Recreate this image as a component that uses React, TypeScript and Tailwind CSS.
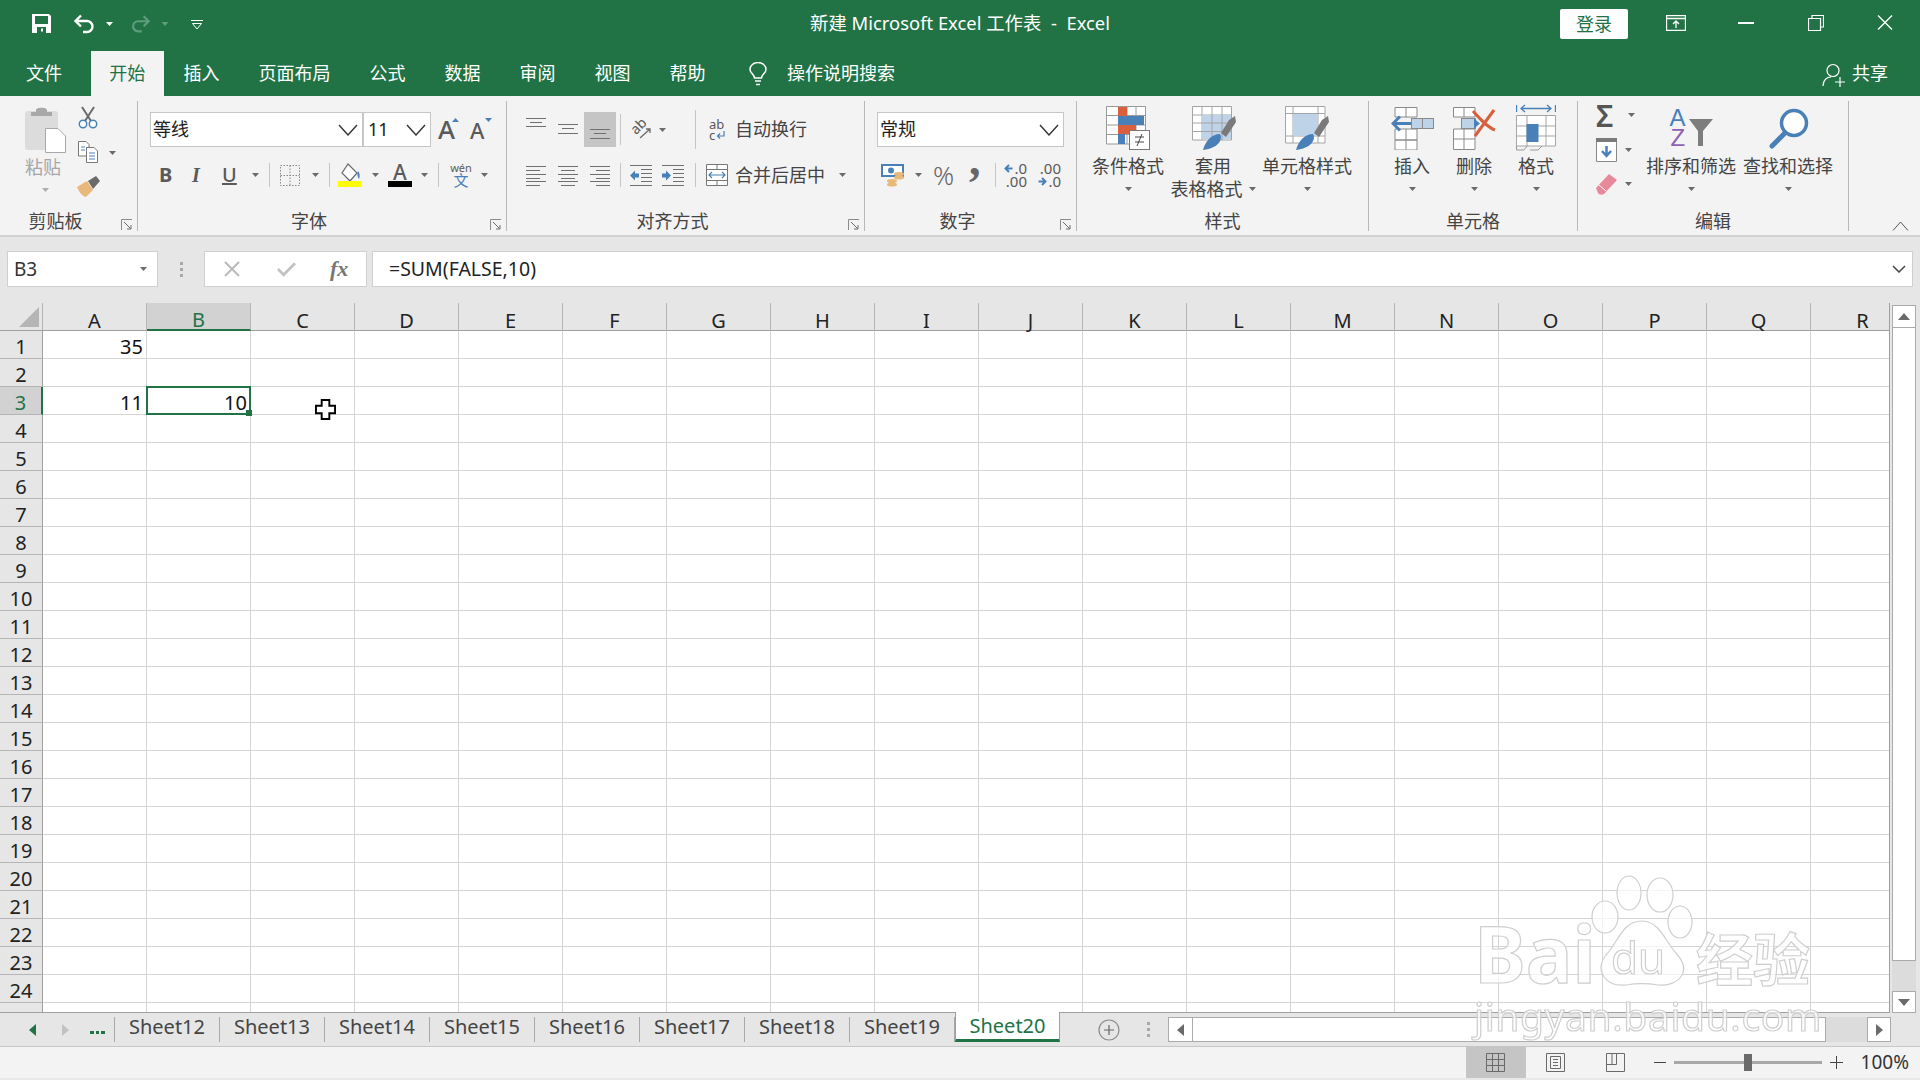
import type { ReactNode } from "react";

const COLS = ["A", "B", "C", "D", "E", "F", "G", "H", "I", "J", "K", "L", "M", "N", "O", "P", "Q", "R"];
const ROWS = Array.from({ length: 25 }, (_, i) => i + 1);
const TABS = ["文件", "开始", "插入", "页面布局", "公式", "数据", "审阅", "视图", "帮助"];
const SHEETS = ["Sheet12", "Sheet13", "Sheet14", "Sheet15", "Sheet16", "Sheet17", "Sheet18", "Sheet19"];
const VALUES: Record<string, string> = { A1: "35", A3: "11", B3: "10" };

const GRAY = "#6a6a6a";
const BLUE = "#4a80b8";
const RED = "#d8603c";

function Caret({ className = "" }: { className?: string }) {
  return (
    <svg viewBox="0 0 7 4" className={`w-[7px] h-[4px] shrink-0 ${className}`}>
      <path d="M0 0H7L3.5 4Z" fill={GRAY} />
    </svg>
  );
}

function Launcher() {
  return (
    <svg viewBox="0 0 11 11" className="absolute right-[5px] bottom-[1px] w-[11px] h-[11px]">
      <path d="M.5 11V.5H11" fill="none" stroke="#8a8a8a" />
      <path d="M3 3L9.5 9.5M6 10H10V6" fill="none" stroke="#6a6a6a" />
    </svg>
  );
}

function Group({ w, label, launcher, children }: { w: string; label: string; launcher?: boolean; children: ReactNode }) {
  return (
    <section className={`${w} h-full shrink-0 border-r border-[#b9b9b9] flex flex-col relative`}>
      <div className="h-[112px] flex">{children}</div>
      <div className={`h-[16px] leading-[16px] text-center text-[18px] text-[#444] ${launcher ? "pr-[26px]" : ""}`}>{label}</div>
      {launcher && <Launcher />}
    </section>
  );
}

function Sep({ className = "" }: { className?: string }) {
  return <div className={`w-px self-stretch bg-[#c6c6c6] shrink-0 ${className}`} />;
}

function Combo({ w, text, tw }: { w: string; text: string; tw?: string }) {
  return (
    <div className={`${w} h-[35px] bg-white border border-[#c6c6c6] flex items-center justify-between pl-[2px] pr-[4px] shrink-0`}>
      <span className={`text-[18px] text-[#222] ${tw ?? ""}`}>{text}</span>
      <svg viewBox="0 0 20 12" className="w-[20px] h-[12px]">
        <path d="M1 1L10 11L19 1" fill="none" stroke="#333" strokeWidth="1.4" />
      </svg>
    </div>
  );
}

function Lines({ rows, className = "" }: { rows: number[][]; className?: string }) {
  return (
    <svg viewBox="0 0 20 21" className={`w-[20px] h-[21px] shrink-0 ${className}`}>
      {rows.map(([a, b, y]) => (
        <path key={y} d={`M${a} ${y + 0.5}H${b}`} stroke="#707070" />
      ))}
    </svg>
  );
}

function BigBtn({ w, icon, lines, inlineCaret }: { w: string; icon: ReactNode; lines: string[]; inlineCaret?: boolean }) {
  return (
    <div className={`${w} shrink-0 flex flex-col items-center`}>
      <div className="h-[54px] flex items-center justify-center">{icon}</div>
      <div className="h-[22px] leading-[22px] text-[18px] text-[#444] whitespace-nowrap">{lines[0]}</div>
      <div className="h-[24px] flex items-center justify-center gap-[6px] text-[18px] text-[#444] whitespace-nowrap">
        {lines[1] && <span>{lines[1]}</span>}
        {(!lines[1] || inlineCaret) && <Caret />}
      </div>
    </div>
  );
}

function CondIcon() {
  return (
    <svg viewBox="0 0 44 44" className="w-[44px] h-[44px]">
      <path d="M.5.5H39.5V38H.5ZM.5 9.5H39.5M.5 19H39.5M.5 28.5H39.5M12.5.5V38M21 .5V38M30 .5V38" fill="#fff" stroke="#999" />
      <rect x="12" y="1" width="9" height="9" fill={RED} />
      <rect x="12" y="10" width="26" height="9" fill={BLUE} />
      <rect x="12" y="19" width="18" height="9" fill={RED} />
      <rect x="12" y="28" width="7" height="10" fill={BLUE} />
      <rect x="23.5" y="24.5" width="20" height="19" fill="#fff" stroke="#777" />
      <path d="M29 31H38M29 36H38M36 28L31 40" stroke="#444" fill="none" />
    </svg>
  );
}

function TableIcon() {
  return (
    <svg viewBox="0 0 44 44" className="w-[44px] h-[44px] ml-[2px]">
      <path d="M.5.5H39.5V34H.5ZM.5 9H39.5M.5 17H39.5M.5 25.5H39.5M10 .5V34M20 .5V34M30 .5V34" fill="#fff" stroke="#a5a5a5" />
      <rect x="10" y="9" width="29" height="24" fill="#bfd3e8" />
      <path d="M10 17H39M10 25.5H39M20 9V34M30 9V34" stroke="#a5a5a5" />
      <path d="M29 27L37 14L43 10L44 16L34 31Z" fill="#7a7a7a" />
      <path d="M11 44C13 36 19 28 28 28C31 33 27 42 11 44Z" fill={BLUE} />
    </svg>
  );
}

function StyleIcon() {
  return (
    <svg viewBox="0 0 44 44" className="w-[44px] h-[44px]">
      <path d="M.5.5H40V37H.5ZM.5 7.5H40M8 .5V37M33 .5V37M.5 30H40" fill="#fff" stroke="#a5a5a5" />
      <rect x="8" y="8" width="25" height="22" fill="#bfd3e8" />
      <path d="M29 27L37 14L43 10L44 16L34 31Z" fill="#7a7a7a" />
      <path d="M11 44C13 36 19 28 28 28C31 33 27 42 11 44Z" fill={BLUE} />
    </svg>
  );
}

function InsertIcon() {
  return (
    <svg viewBox="0 0 43 43" className="w-[43px] h-[43px]">
      <path d="M4 .5H26V10H4ZM15 .5V10M4 33H26V43H4ZM4 33V22H26V33ZM15 22V42.5" fill="#fff" stroke="#8a8a8a" />
      <path d="M20 16.5H2M9 9.5L2 16.5L9 23.5" fill="none" stroke={BLUE} strokeWidth="3" />
      <rect x="20.5" y="11.5" width="22" height="10" fill="#bfd3e8" stroke="#8a8a8a" />
      <path d="M31.5 11.5V21.5" stroke="#8a8a8a" />
    </svg>
  );
}

function DeleteIcon() {
  return (
    <svg viewBox="0 0 43 43" className="w-[43px] h-[43px]">
      <path d="M.5.5H22V10H.5ZM11 .5V10M.5 22H22V42.5H.5ZM.5 32H22M11 22V42.5" fill="#fff" stroke="#8a8a8a" />
      <rect x="8.5" y="11.5" width="14" height="10" fill="#bfd3e8" stroke="#8a8a8a" />
      <path d="M21 11.5L27 16.5L21 21.5Z" fill={BLUE} />
      <path d="M22 29L41 3M20 4C27 12 34 20 42 23" fill="none" stroke={RED} strokeWidth="3" />
    </svg>
  );
}

function FormatIcon() {
  return (
    <svg viewBox="0 0 40 48" className="w-[40px] h-[48px]">
      <path d="M.5 1V8M39.5 1V8M5 4.5H35M9 1L5 4.5L9 8M31 1L35 4.5L31 8" fill="none" stroke={BLUE} strokeWidth="1.3" />
      <path d="M.5 11.5H39.5V42H.5ZM11 11.5V42M30 11.5V42M.5 22H39.5M.5 32H39.5" fill="#fff" stroke="#a5a5a5" />
      <rect x="10.5" y="20" width="12" height="18" fill={BLUE} />
      <path d="M.5 42V46H8L11 42M14 46H22L26 42" fill="none" stroke="#999" />
    </svg>
  );
}

function SortIcon() {
  return (
    <div className="w-[43px] h-[40px] flex items-start font-['Liberation_Sans',sans-serif]">
      <div className="w-[19px] flex flex-col text-[24px] leading-[20px]">
        <span className="text-[#4a80b8]">A</span>
        <span className="text-[#9060b8] pl-[1px]">Z</span>
      </div>
      <svg viewBox="0 0 24 28" className="w-[24px] h-[28px] mt-[10px]">
        <path d="M0 1H24L14 13V28H9V13Z" fill="#7d7d7d" />
      </svg>
    </div>
  );
}

function FindIcon() {
  return (
    <svg viewBox="0 0 41 41" className="w-[41px] h-[41px]">
      <circle cx="26" cy="15" r="12.5" fill="#fff" stroke={BLUE} strokeWidth="3.5" />
      <path d="M17 25L4 38" stroke={BLUE} strokeWidth="5" strokeLinecap="round" />
    </svg>
  );
}

function Watermark() {
  return (
    <svg viewBox="0 0 380 190" className="absolute left-[1460px] top-[865px] w-[380px] h-[190px] blur-[0.5px] pointer-events-none">
      <g fill="#fff" fillOpacity="0.72" stroke="#cfcfcf" strokeWidth="1.2" fontFamily="Noto Sans, Noto Sans CJK SC, sans-serif" fontWeight="700">
        <text x="14" y="118" fontSize="78">Bai</text>
        <ellipse cx="145" cy="52" rx="13" ry="16" />
        <ellipse cx="169" cy="28" rx="12" ry="17" />
        <ellipse cx="200" cy="30" rx="13" ry="17" />
        <ellipse cx="220" cy="57" rx="12" ry="16" />
        <path d="M182 56C200 56 206 78 216 88C234 108 216 122 198 120C186 118 178 118 166 120C146 122 134 106 146 90C158 78 162 56 182 56Z" />
        <text x="151" y="109" fontSize="44" fontWeight="400">du</text>
        <text x="236" y="116" fontSize="57" fontWeight="700">经验</text>
        <text x="14" y="166" fontSize="39" fontWeight="400" letterSpacing="0.6">jingyan.baidu.com</text>
      </g>
    </svg>
  );
}

export default function App() {
  return (
    <div className="relative w-[1920px] h-[1080px] overflow-hidden flex flex-col bg-[#e6e6e6] font-['Noto_Sans','Noto_Sans_CJK_SC',sans-serif]">
      {/* title bar */}
      <header className="h-[51px] bg-[#217346] flex items-center text-white shrink-0 relative">
        <div className="flex items-center pl-[32px]">
          <svg viewBox="0 0 19 19" className="w-[19px] h-[19px] -mt-[4px]">
            <path fillRule="evenodd" fill="#fff" d="M0 0H17L19 2V19H0ZM3 2V10H16V2ZM5 13V19H14V13ZM9 14.5V17.5H11V14.5Z" />
          </svg>
          <svg viewBox="0 0 24 20" className="w-[24px] h-[20px] ml-[22px] -mt-[4px]">
            <path d="M3 7H14A5.5 5.5 0 0 1 14 18H10M8 1.5L2.5 7L8 12.5" fill="none" stroke="#fff" strokeWidth="2.4" />
          </svg>
          <svg viewBox="0 0 7 4" className="w-[7px] h-[4px] ml-[9px] -mt-[3px]"><path d="M0 0H7L3.5 4Z" fill="#fff" /></svg>
          <svg viewBox="0 0 24 20" className="w-[22px] h-[20px] ml-[16px] -mt-[4px] -scale-x-100">
            <path d="M3 7H14A5.5 5.5 0 0 1 14 18H10M8 1.5L2.5 7L8 12.5" fill="none" stroke="#5f9c7d" strokeWidth="2.4" />
          </svg>
          <svg viewBox="0 0 7 4" className="w-[8px] h-[4px] ml-[10px] -mt-[3px]"><path d="M0 0H7L3.5 4Z" fill="#5f9c7d" /></svg>
          <svg viewBox="0 0 12 10" className="w-[12px] h-[10px] ml-[22px] -mt-[2px]">
            <path d="M0 .5H12M1.5 3.5H10.5L6 9Z" fill="none" stroke="#fff" />
          </svg>
        </div>
        <div className="absolute inset-x-0 top-[11px] text-center text-[18.4px] leading-[24px] pointer-events-none">新建 Microsoft Excel 工作表&nbsp; -&nbsp; Excel</div>
        <div className="ml-auto flex items-center h-full -mt-[6px]">
          <button className="w-[68px] h-[30px] bg-white rounded-[2px] text-[#217346] text-[18px] leading-[30px] mt-[3px]">登录</button>
          <svg viewBox="0 0 20 16" className="w-[20px] h-[16px] ml-[38px]">
            <path d="M.5.5H19.5V15.5H.5ZM.5 3.5H19.5M10 13V6.5M7 9L10 6L13 9" fill="none" stroke="#fff" strokeWidth="1.3" />
          </svg>
          <div className="w-[16px] h-[2px] bg-white ml-[52px]" />
          <svg viewBox="0 0 16 16" className="w-[16px] h-[16px] ml-[54px]">
            <path d="M4 3V.5H15.5V12H12.5M.5 3.5H12.5V15.5H.5Z" fill="none" stroke="#fff" strokeWidth="1.2" />
          </svg>
          <svg viewBox="0 0 16 15" className="w-[16px] h-[15px] ml-[53px] mr-[27px]">
            <path d="M1 .5L15 14.5M15 .5L1 14.5" fill="none" stroke="#fff" strokeWidth="1.3" />
          </svg>
        </div>
      </header>

      {/* ribbon tabs */}
      <nav className="h-[45px] bg-[#217346] flex items-end text-white text-[18px] shrink-0">
        <div className="h-full pl-[26px] pr-[28.6px] flex items-center">{TABS[0]}</div>
        <div className="h-full w-[73.4px] bg-[#f3f3f3] text-[#217346] flex items-center justify-center">{TABS[1]}</div>
        {TABS.slice(2).map((t) => (
          <div key={t} className="h-full px-[19.5px] flex items-center">{t}</div>
        ))}
        <svg viewBox="0 0 20 24" className="w-[20px] h-[24px] ml-[23px] mb-[10px]">
          <path d="M6.5 16C6 12 2 11 2 7.5A8 7 0 0 1 18 7.5C18 11 14 12 13.500 16ZM7 19H13M8 22.500H12" fill="none" stroke="#fff" strokeWidth="1.5" />
        </svg>
        <div className="h-full flex items-center pl-[19px]">操作说明搜索</div>
        <div className="ml-auto h-full flex items-center pr-[32px]">
          <svg viewBox="0 0 23 24" className="w-[23px] h-[24px] mr-[7px] mt-[3px]">
            <circle cx="11" cy="7.500" r="6" fill="none" stroke="#fff" strokeWidth="1.2" />
            <path d="M1 23C1 17 5 14 9 14M13 19H23M18 14V24" fill="none" stroke="#fff" strokeWidth="1.2" />
          </svg>
          共享
        </div>
      </nav>

      {/* ribbon */}
      <div className="h-[141px] bg-[#f3f3f3] border-b-2 border-[#d2d2d2] pt-[5px] pb-[4px] flex shrink-0 relative">
        <Group w="w-[138px]" label="剪贴板" launcher>
          <div className="pl-[25px] w-[78px] flex flex-col items-start">
            <svg viewBox="0 0 41 46" className="w-[41px] h-[46px] mt-[6px]">
              <rect x="0" y="4" width="33" height="39" rx="3" fill="#dcdcdc" />
              <path d="M11 5V3C11 0 22 0 22 3V5H27V9H6V5Z" fill="#a8a8a8" />
              <path d="M20.500 21.500H33L40.500 29V45.500H20.500Z" fill="#fff" stroke="#a8a8a8" />
            </svg>
            <span className="text-[18px] leading-[20px] mt-[4px] text-[#a6a6a6]">粘贴</span>
            <Caret className="ml-[17px] mt-[11px] opacity-50" />
          </div>
          <div className="flex flex-col">
            <svg viewBox="0 0 20 23" className="w-[20px] h-[23px] mt-[5px]">
              <path d="M4 1L13 15M16 1L7 15" stroke="#6a6a6a" strokeWidth="2" />
              <circle cx="5" cy="18" r="3.700" fill="#fff" stroke={BLUE} strokeWidth="1.500" />
              <circle cx="15" cy="18" r="3.700" fill="#fff" stroke={BLUE} strokeWidth="1.500" />
            </svg>
            <div className="flex items-center mt-[12px]">
              <svg viewBox="0 0 20 22" className="w-[20px] h-[22px]">
                <path d="M.5.5H8L11 3.500V15H.5Z" fill="#fff" stroke="#777" />
                <path d="M8.500 6.500H16L19.500 10V21.500H8.500Z" fill="#fff" stroke="#777" />
                <path d="M3 6H7M3 9H7M11 12H17M11 15H17M11 18H17" stroke={BLUE} />
              </svg>
              <Caret className="ml-[11px] mt-[2px]" />
            </div>
            <svg viewBox="0 0 24 21" className="w-[24px] h-[21px] mt-[13px] -ml-[2px]">
              <path d="M1 11L11 5L17 14L10 21C6 20 3 16 1 11Z" fill="#e8b97a" />
              <path d="M12 5L20 0L24 5L17 13Z" fill="#6a6a6a" />
            </svg>
          </div>
        </Group>

        <Group w="w-[369px]" label="字体" launcher>
          <div className="pl-[12px] flex flex-col">
            <div className="flex items-center mt-[11px]">
              <Combo w="w-[213px]" text="等线" />
              <Combo w="w-[68px]" text="11" tw="pl-[2px]" />
              <div className="relative w-[20px] h-[35px] ml-[7px] text-[26px] leading-[35px] text-[#5a5a5a] font-medium">
                A
                <svg viewBox="0 0 7 4" className="absolute right-[-1px] top-[6px] w-[7px] h-[4px]"><path d="M0 4H7L3.500 0Z" fill={BLUE} /></svg>
              </div>
              <div className="relative w-[20px] h-[35px] ml-[12px] text-[22px] leading-[37px] text-[#5a5a5a] font-medium">
                A
                <svg viewBox="0 0 7 4" className="absolute right-[-2px] top-[6px] w-[7px] h-[4px]"><path d="M0 0H7L3.500 4Z" fill={BLUE} /></svg>
              </div>
            </div>
            <div className="flex items-center h-[24px] mt-[16px] text-[#5a5a5a]">
              <span className="w-[13px] ml-[9px] text-[20px] font-bold leading-[24px]">B</span>
              <span className="w-[12px] ml-[20px] text-[20px] italic leading-[24px] font-['Liberation_Serif',serif] font-bold">I</span>
              <span className="w-[15px] ml-[18px] text-[20px] underline leading-[24px] font-medium">U</span>
              <Caret className="ml-[15px]" />
              <Sep className="ml-[10px]" />
              <svg viewBox="0 0 20 21" className="w-[20px] h-[21px] ml-[10px]">
                <path d="M.5.5H19.5V20.5H.5ZM10 .5V20.5M.5 10.500H19.500" fill="none" stroke="#888" strokeDasharray="1.500 1.500" />
              </svg>
              <Caret className="ml-[12px]" />
              <Sep className="ml-[10px]" />
              <svg viewBox="0 0 24 24" className="w-[24px] h-[24px] ml-[8px]">
                <path d="M10 1L19 10L12 18L4 10Z" fill="#fff" stroke="#6a6a6a" strokeWidth="1.200" />
                <path d="M20 8C22 10 22 14 21 16C19 13 19 11 20 8Z" fill={BLUE} />
                <rect x="0" y="18" width="24" height="6" fill="#ffff00" />
              </svg>
              <Caret className="ml-[10px]" />
              <div className="w-[24px] h-[24px] ml-[9px] flex flex-col items-center">
                <span className="h-[18px] text-[21px] leading-[18px] font-medium text-[#5a5a5a]">A</span>
                <i className="w-[24px] h-[6px] bg-black" />
              </div>
              <Caret className="ml-[9px]" />
              <Sep className="ml-[10px]" />
              <div className="w-[24px] ml-[10px] flex flex-col items-center">
                <span className="text-[11px] leading-[11px] text-[#5a5a5a]">wén</span>
                <span className="text-[15px] leading-[15px] text-[#4a80b8]">文</span>
              </div>
              <Caret className="ml-[8px]" />
            </div>
          </div>
        </Group>

        <Group w="w-[358px]" label="对齐方式" launcher>
          <div className="pl-[19px] flex flex-col">
            <div className="flex items-center h-[35px] mt-[11px]">
              <Lines rows={[[0, 20, 2], [4, 16, 6], [0, 20, 10]]} className="-mt-[6px]" />
              <Lines rows={[[0, 20, 5], [4, 16, 9], [0, 20, 14]]} className="ml-[12px]" />
              <div className="w-[32px] h-[35px] ml-[6px] bg-[#c5c5c5] flex items-center justify-center">
                <Lines rows={[[0, 20, 10], [4, 16, 14], [0, 20, 19]]} />
              </div>
              <Sep className="ml-[4px] my-[2px]" />
              <div className="relative w-[20px] h-[20px] ml-[10px]">
                <span className="absolute -left-[1px] -top-[2px] text-[14px] leading-[16px] text-[#5a5a5a] -rotate-45">ab</span>
                <svg viewBox="0 0 20 20" className="absolute inset-0 w-[20px] h-[20px]">
                  <path d="M9 18L19 9M15 9H19V13" fill="none" stroke="#6a6a6a" strokeWidth="1.300" />
                </svg>
              </div>
              <Caret className="ml-[8px]" />
              <Sep className="ml-[29px] my-[-2px]" />
              <div className="w-[18px] h-[22px] ml-[13px] flex flex-col text-[13px] leading-[11px] text-[#5a5a5a]">
                <span>ab</span>
                <div className="flex items-center">
                  <span>c</span>
                  <svg viewBox="0 0 9 8" className="w-[9px] h-[8px] ml-[1px]">
                    <path d="M8 0V5H2M4 2.500L1.500 5L4 7.500" fill="none" stroke={BLUE} strokeWidth="1.200" />
                  </svg>
                </div>
              </div>
              <span className="ml-[8px] text-[18px] text-[#444] whitespace-nowrap">自动换行</span>
            </div>
            <div className="flex items-center h-[24px] mt-[16px]">
              <Lines rows={[[0, 20, 1], [0, 14, 5], [0, 20, 9], [0, 14, 13], [0, 20, 16], [0, 14, 20]]} />
              <Lines rows={[[0, 20, 1], [3, 17, 5], [0, 20, 9], [3, 17, 13], [0, 20, 16], [3, 17, 20]]} className="ml-[12px]" />
              <Lines rows={[[0, 20, 1], [6, 20, 5], [0, 20, 9], [6, 20, 13], [0, 20, 16], [6, 20, 20]]} className="ml-[12px]" />
              <Sep className="ml-[10px]" />
              <svg viewBox="0 0 22 21" className="w-[22px] h-[21px] ml-[9px]">
                <path d="M0 .5H22M11 4.500H22M11 8.500H22M11 12.500H22M11 16.500H22M0 20.500H22" stroke="#707070" />
                <path d="M0 10.500L5 5.500V8.500H9V12.500H5V15.500Z" fill={BLUE} />
              </svg>
              <svg viewBox="0 0 22 21" className="w-[22px] h-[21px] ml-[10px]">
                <path d="M0 .5H22M11 4.500H22M11 8.500H22M11 12.500H22M11 16.500H22M0 20.500H22" stroke="#707070" />
                <path d="M9 10.500L4 5.500V8.500H0V12.500H4V15.500Z" fill={BLUE} />
              </svg>
              <Sep className="ml-[11px]" />
              <svg viewBox="0 0 22 22" className="w-[22px] h-[22px] ml-[10px]">
                <path d="M.5.5H21.500V21.500H.5ZM.5 5.500H21.500M.5 16.500H21.500M11 .5V5.500M11 16.500V21.500" fill="#fff" stroke="#777" />
                <path d="M3 11H19M6 8L3 11L6 14M16 8L19 11L16 14" fill="none" stroke={BLUE} strokeWidth="1.200" />
              </svg>
              <span className="ml-[7px] text-[18px] text-[#444] whitespace-nowrap">合并后居中</span>
              <Caret className="ml-[14px]" />
            </div>
          </div>
        </Group>

        <Group w="w-[212px]" label="数字" launcher>
          <div className="pl-[12px] flex flex-col">
            <div className="mt-[11px]"><Combo w="w-[187px]" text="常规" /></div>
            <div className="flex items-center h-[24px] mt-[16px]">
              <svg viewBox="0 0 24 24" className="w-[24px] h-[24px] ml-[4px]">
                <rect x="0" y="1" width="23" height="13" fill={BLUE} />
                <rect x="2" y="3" width="19" height="9" fill="#fff" />
                <circle cx="10" cy="7.500" r="3" fill={BLUE} />
                <ellipse cx="18" cy="11" rx="5" ry="2" fill="#e8b97a" />
                <ellipse cx="18" cy="14.500" rx="5" ry="2" fill="#e8b97a" />
                <ellipse cx="11" cy="18" rx="5" ry="2" fill="#e8b97a" />
                <ellipse cx="11" cy="21.500" rx="5" ry="2" fill="#e8b97a" />
              </svg>
              <Caret className="ml-[10px]" />
              <span className="ml-[11px] w-[22px] text-[26px] leading-[24px] text-[#666] font-light">%</span>
              <span className="ml-[14px] w-[13px] h-[24px] text-[46px] leading-[24px] text-[#666] font-bold -mt-[30px] font-['Liberation_Serif',serif]">,</span>
              <Sep className="ml-[13px]" />
              <div className="ml-[9px] w-[22px] flex flex-col items-end text-[15px] leading-[13px] text-[#5a5a5a]">
                <div className="flex items-center">
                  <svg viewBox="0 0 9 9" className="w-[9px] h-[9px] mr-[1px]"><path d="M8.500 4.500H2M5 1L1.500 4.500L5 8" fill="none" stroke={BLUE} strokeWidth="2" /></svg>
                  .0
                </div>
                <div>.00</div>
              </div>
              <div className="ml-[12px] w-[22px] flex flex-col items-end text-[15px] leading-[13px] text-[#5a5a5a]">
                <div>.00</div>
                <div className="flex items-center">
                  <svg viewBox="0 0 9 9" className="w-[9px] h-[9px] mr-[1px]"><path d="M.5 4.500H7M4 1L7.500 4.500L4 8" fill="none" stroke={BLUE} strokeWidth="2" /></svg>
                  .0
                </div>
              </div>
            </div>
          </div>
        </Group>

        <Group w="w-[292px]" label="样式">
          <div className="pl-[15px] flex">
            <BigBtn w="w-[72px]" icon={<CondIcon />} lines={["条件格式"]} />
            <BigBtn w="w-[86px] ml-[6px]" icon={<TableIcon />} lines={["套用", "表格格式"]} inlineCaret />
            <BigBtn w="w-[90px] ml-[6px]" icon={<StyleIcon />} lines={["单元格样式"]} />
          </div>
        </Group>

        <Group w="w-[209px]" label="单元格">
          <div className="pl-[12px] flex">
            <BigBtn w="w-[62px]" icon={<InsertIcon />} lines={["插入"]} />
            <BigBtn w="w-[62px]" icon={<DeleteIcon />} lines={["删除"]} />
            <BigBtn w="w-[62px]" icon={<FormatIcon />} lines={["格式"]} />
          </div>
        </Group>

        <Group w="w-[271px]" label="编辑">
          <div className="pl-[18px] w-[67px] shrink-0 flex flex-col">
            <div className="flex items-center h-[24px] mt-[3px]">
              <span className="w-[20px] text-[30px] leading-[24px] text-[#555] font-semibold">Σ</span>
              <Caret className="ml-[12px] -mt-[2px]" />
            </div>
            <div className="flex items-center h-[24px] mt-[10px]">
              <svg viewBox="0 0 21 24" className="w-[21px] h-[24px]">
                <path d="M.5.5H20.500V23.500H.5Z" fill="#fff" stroke="#888" />
                <rect x="0" y="0" width="21" height="4" fill="#7a7a7a" />
                <path d="M10.500 8V17M6 13L10.500 18L15 13" fill="none" stroke={BLUE} strokeWidth="2.500" />
              </svg>
              <Caret className="ml-[8px]" />
            </div>
            <div className="flex items-center h-[24px] mt-[10px]">
              <svg viewBox="0 0 21 22" className="w-[21px] h-[22px]">
                <path d="M0 15L13 1L21 7L8 21C6 22 3 22 2 20Z" fill="#e8889a" />
                <path d="M3 12L10 18" stroke="#fff" />
              </svg>
              <Caret className="ml-[8px]" />
            </div>
          </div>
          <BigBtn w="w-[92px]" icon={<SortIcon />} lines={["排序和筛选"]} />
          <BigBtn w="w-[92px] ml-[5px]" icon={<FindIcon />} lines={["查找和选择"]} />
        </Group>

        <svg viewBox="0 0 17 10" className="absolute left-[1892px] top-[125px] w-[17px] h-[10px]">
          <path d="M1 9.500L8.500 1L16 9.500" fill="none" stroke="#555" />
        </svg>
      </div>

      {/* formula bar */}
      <div className="h-[66px] pt-[14px] flex items-start shrink-0 pl-[7px]">
        <div className="w-[151px] h-[36px] bg-white border border-[#d0d0d0] flex items-center justify-between pl-[6px] pr-[10px] text-[19px] text-[#333]">
          B3
          <Caret />
        </div>
        <div className="w-[46px] h-[36px] flex flex-col items-center justify-center gap-[3px]">
          <i className="w-[3px] h-[3px] bg-[#a8a8a8]" />
          <i className="w-[3px] h-[3px] bg-[#a8a8a8]" />
          <i className="w-[3px] h-[3px] bg-[#a8a8a8]" />
        </div>
        <div className="w-[163px] h-[36px] bg-white border border-[#d0d0d0] flex items-center">
          <svg viewBox="0 0 16 16" className="w-[16px] h-[16px] ml-[19px]">
            <path d="M1 1L15 15M15 1L1 15" stroke="#b9b9b9" strokeWidth="2" />
          </svg>
          <svg viewBox="0 0 20 16" className="w-[19px] h-[16px] ml-[37px]">
            <path d="M1 8L7 14L19 2" fill="none" stroke="#c2c2c2" strokeWidth="3" />
          </svg>
          <span className="ml-[34px] text-[22px] leading-none italic font-bold font-['Liberation_Serif',serif] text-[#777]">fx</span>
        </div>
        <div className="w-[1541px] ml-[5px] h-[36px] bg-white border border-[#d0d0d0] flex items-center justify-between pl-[16px] pr-[6px] text-[19.5px] text-[#222]">
          =SUM(FALSE,10)
          <svg viewBox="0 0 14 8" className="w-[14px] h-[8px]">
            <path d="M1 1L7 7L13 1" fill="none" stroke="#444" strokeWidth="1.500" />
          </svg>
        </div>
      </div>

      {/* sheet */}
      <div className="h-[710px] flex shrink-0">
        <div className="w-[1890px] overflow-hidden border-r border-b border-[#9f9f9f] bg-white shrink-0">
          <div className="flex h-[27px] bg-[#e6e6e6] box-content border-b border-[#9f9f9f]">
            <div className="w-[43px] h-[27px] border-r border-[#b5b5b5] shrink-0 flex items-end justify-end pr-[3px] pb-[3px]">
              <svg viewBox="0 0 20 20" className="w-[20px] h-[20px]"><path d="M20 0V20H0Z" fill="#b5b5b5" /></svg>
            </div>
            {COLS.map((c) => (
              <div
                key={c}
                className={`w-[104px] shrink-0 h-[28px] border-r border-[#b5b5b5] flex items-center justify-center pt-[7px] text-[20px] leading-none ${
                  c === "B" ? "bg-[#d2d2d2] text-[#217346] border-b-[2px] border-b-[#217346]" : "text-[#222]"
                }`}
              >
                {c}
              </div>
            ))}
          </div>
          <div>
            {ROWS.map((r) => (
              <div key={r} className="flex h-[28px]">
                <div
                  className={`w-[43px] shrink-0 border-r border-b border-b-[#b5b5b5] border-r-[#9f9f9f] flex items-center justify-center pt-[5px] text-[20px] leading-none ${
                    r === 3 ? "bg-[#d2d2d2] text-[#217346] border-r-2 border-r-[#217346]" : "bg-[#e6e6e6] text-[#222]"
                  }`}
                >
                  {r}
                </div>
                {COLS.map((c) => (
                  <div
                    key={c}
                    className="relative w-[104px] shrink-0 border-r border-b border-[#d4d4d4] flex items-center justify-end pr-[3px] pt-[5px] text-[20px] leading-none text-[#111]"
                  >
                    {VALUES[`${c}${r}`]}
                    {c === "B" && r === 3 && (
                      <div className="absolute -inset-px border-[2.5px] border-[#217346] z-10">
                        <i className="absolute -right-[3px] -bottom-[3px] w-[6px] h-[6px] bg-[#217346]" />
                      </div>
                    )}
                  </div>
                ))}
              </div>
            ))}
          </div>
        </div>
        <div className="w-[30px] pt-[2px] flex flex-col items-center pr-[2px]">
          <div className="w-[24px] h-[23px] bg-white border border-[#ababab] flex items-center justify-center">
            <svg viewBox="0 0 12 7" className="w-[12px] h-[7px]"><path d="M0 7H12L6 0Z" fill={GRAY} /></svg>
          </div>
          <div className="w-[24px] h-[633px] bg-white border-x border-b border-[#ababab]" />
          <div className="w-[24px] h-[30px] bg-[#dcdcdc]" />
          <div className="w-[24px] h-[22px] bg-white border border-[#ababab] flex items-center justify-center">
            <svg viewBox="0 0 12 7" className="w-[12px] h-[7px]"><path d="M0 0H12L6 7Z" fill={GRAY} /></svg>
          </div>
        </div>
      </div>

      {/* sheet tabs */}
      <div className="h-[33px] flex items-start shrink-0">
        <div className="w-[115px] h-[25px] flex items-center shrink-0 border-r border-[#a8a8a8] mt-[4px]">
          <svg viewBox="0 0 7 12" className="w-[7px] h-[12px] ml-[29px]"><path d="M7 0V12L0 6Z" fill="#217346" /></svg>
          <svg viewBox="0 0 7 12" className="w-[7px] h-[12px] ml-[26px]"><path d="M0 0V12L7 6Z" fill="#c2c2c2" /></svg>
          <span className="ml-[21px] flex gap-[2px] items-end mt-[6px]">
            <i className="w-[3.500px] h-[3.500px] bg-[#217346]" />
            <i className="w-[3.500px] h-[3.500px] bg-[#217346]" />
            <i className="w-[3.500px] h-[3.500px] bg-[#217346]" />
          </span>
        </div>
        {SHEETS.map((s) => (
          <div key={s} className="w-[105px] h-[25px] mt-[4px] border-r border-[#a8a8a8] shrink-0 text-center text-[20px] leading-[19px] text-[#444]">
            {s}
          </div>
        ))}
        <div className="w-[105px] h-[30px] -mt-px bg-white border-x border-[#9f9f9f] border-b-[3px] border-b-[#217346] text-[#217346] shrink-0 flex items-center justify-center text-[20px] leading-[24px]">
          Sheet20
        </div>
        <svg viewBox="0 0 22 22" className="w-[22px] h-[22px] ml-[38px] mt-[6px]">
          <circle cx="11" cy="11" r="10" fill="none" stroke="#8a8a8a" strokeWidth="1.200" />
          <path d="M11 6V16M6 11H16" stroke="#666" strokeWidth="1.200" />
        </svg>
        <span className="ml-[27px] mt-[9px] flex flex-col gap-[3px]">
          <i className="w-[3px] h-[3px] bg-[#a8a8a8]" />
          <i className="w-[3px] h-[3px] bg-[#a8a8a8]" />
          <i className="w-[3px] h-[3px] bg-[#a8a8a8]" />
        </span>
        <div className="ml-[18px] mt-[4px] h-[25px] flex shrink-0">
          <div className="w-[25px] bg-white border border-[#ababab] flex items-center justify-center">
            <svg viewBox="0 0 7 12" className="w-[7px] h-[12px]"><path d="M7 0V12L0 6Z" fill={GRAY} /></svg>
          </div>
          <div className="w-[633px] bg-white border-y border-r border-[#ababab]" />
          <div className="w-[41px] bg-[#dcdcdc]" />
          <div className="w-[24px] bg-white border border-[#ababab] flex items-center justify-center">
            <svg viewBox="0 0 7 12" className="w-[7px] h-[12px]"><path d="M0 0V12L7 6Z" fill={GRAY} /></svg>
          </div>
        </div>
      </div>

      {/* status bar */}
      <footer className="h-[32px] bg-[#f3f3f3] border-t border-[#c6c6c6] flex items-stretch justify-end shrink-0">
        <div className="w-[60px] bg-[#c5c5c5] flex items-center justify-center">
          <svg viewBox="0 0 19 19" className="w-[19px] h-[19px]">
            <path d="M.5.5H18.500V18.500H.5ZM.5 6.500H18.500M.5 12.500H18.500M6.500 .5V18.500M12.500 .5V18.500" fill="none" stroke="#6a6a6a" />
          </svg>
        </div>
        <div className="flex items-center">
          <svg viewBox="0 0 19 19" className="w-[19px] h-[19px] ml-[20px]">
            <path d="M.5.5H18.500V18.500H.5ZM4.500 3.500H14.500V15.500H4.500ZM7 6.500H12M7 9.500H12M7 12.500H12" fill="none" stroke="#6a6a6a" />
          </svg>
          <svg viewBox="0 0 19 19" className="w-[19px] h-[19px] ml-[41px]">
            <path d="M.5.5H18.500V18.500H.5ZM.5 11.500H10.500V.5M10.500 5V.5M6 .5V11" fill="none" stroke="#6a6a6a" />
          </svg>
          <div className="w-[12px] h-px bg-[#444] ml-[29px]" />
          <div className="relative w-[148px] h-[3px] bg-[#a8a8a8] ml-[8px]">
            <i className="absolute left-[70px] -top-[7px] w-[8px] h-[17px] bg-[#6a6a6a]" />
          </div>
          <svg viewBox="0 0 13 13" className="w-[13px] h-[13px] ml-[8px]">
            <path d="M0 6.500H13M6.500 0V13" stroke="#444" />
          </svg>
          <span className="ml-[18px] mr-[11px] text-[19px] text-[#333] leading-none">100%</span>
        </div>
      </footer>
      <div className="h-[2px] bg-[#e8e8e8] shrink-0" />

      <svg viewBox="0 0 22 22" className="absolute left-[315px] top-[399px] w-[21px] h-[21px] z-20">
        <path d="M7 1H15V7H21V15H15V21H7V15H1V7H7Z" fill="#fff" stroke="#000" strokeWidth="2" />
      </svg>
      <Watermark />
    </div>
  );
}
